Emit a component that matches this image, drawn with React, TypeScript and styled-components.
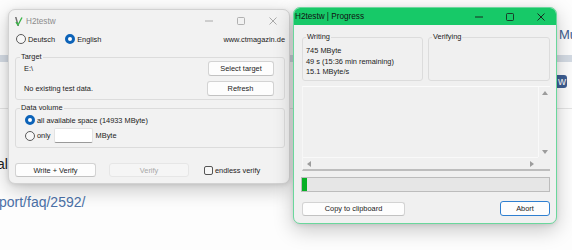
import React from 'react';
import styled, { createGlobalStyle } from 'styled-components';

const GlobalStyle = createGlobalStyle`
  html, body {
    margin: 0;
    padding: 0;
    width: 572px;
    height: 250px;
    overflow: hidden;
    background: #fdfdfd;
  }
  * {
    box-sizing: border-box;
  }
`;

const Desktop = styled.div`
  position: relative;
  width: 572px;
  height: 250px;
  overflow: hidden;
  background: #fdfdfd;
  font-family: 'Liberation Sans', Arial, sans-serif;
`;

/* ---------- browser page behind the windows ---------- */

const BackPage = styled.div`
  display: flex;
  flex-direction: column;
  width: 100%;
  height: 100%;
`;

const BackRow = styled.div<{ $top: number; $h: number; $pad?: number; $end?: boolean }>`
  display: flex;
  align-items: center;
  justify-content: ${(p) => (p.$end ? 'flex-end' : 'flex-start')};
  margin-top: ${(p) => p.$top}px;
  height: ${(p) => p.$h}px;
  padding-left: ${(p) => p.$pad || 0}px;
  white-space: nowrap;
  overflow: hidden;
`;

const PageHeading = styled.span`
  font-size: 13px;
  color: #3f5f8f;
`;

const PageBar = styled.div<{ $top: number; $h: number; $color: string }>`
  margin-top: ${(p) => p.$top}px;
  height: ${(p) => p.$h}px;
  background: ${(p) => p.$color};
`;

const PageButton = styled.div`
  width: 60px;
  height: 13px;
  margin-right: 5px;
  border-radius: 3px;
  background: #3d5e93;
  color: #fff;
  font-size: 11px;
  line-height: 12px;
  text-align: right;
  padding-right: 1px;
`;

const PageText = styled.span<{ $link?: boolean }>`
  font-size: 14px;
  color: ${(p) => (p.$link ? '#4b71a8' : '#202020')};
  margin-left: ${(p) => (p.$link ? -1 : -3)}px;
`;

/* ---------- windows ---------- */

const Window = styled.div<{ $x: number; $y: number; $w: number; $h: number; $active?: boolean }>`
  position: absolute;
  left: ${(p) => p.$x}px;
  top: ${(p) => p.$y}px;
  width: ${(p) => p.$w}px;
  height: ${(p) => p.$h}px;
  display: flex;
  flex-direction: column;
  background: ${(p) => (p.$active ? '#f0f0f0' : '#f2f2f2')};
  border: 1px solid ${(p) => (p.$active ? '#6ad79c' : '#d2d2d2')};
  border-radius: 7px;
  overflow: hidden;
  box-shadow: 0 6px 20px rgba(0, 0, 0, 0.22), 0 1px 4px rgba(0, 0, 0, 0.1);
  font-size: 7.4px;
  color: #1b1b1b;
`;

const TitleBar = styled.div<{ $h: number; $active?: boolean }>`
  display: flex;
  align-items: center;
  flex: none;
  height: ${(p) => p.$h}px;
  background: ${(p) => (p.$active ? '#17c968' : 'transparent')};
  padding-left: ${(p) => (p.$active ? 1 : 5)}px;
`;

const TitleText = styled.span<{ $active?: boolean }>`
  font-size: 8.2px;
  color: ${(p) => (p.$active ? '#111' : '#8c8c8c')};
  margin-left: ${(p) => (p.$active ? 0 : 3)}px;
`;

const Controls = styled.div`
  display: flex;
  margin-left: auto;
  height: 100%;
`;

const ControlButton = styled.div<{ $w: number }>`
  display: flex;
  align-items: center;
  justify-content: center;
  width: ${(p) => p.$w}px;
  height: 100%;
`;

const WindowControls = ({ w, color }: { w: number; color: string }) => (
  <Controls>
    <ControlButton $w={w}>
      <svg width="8" height="8" viewBox="0 0 8 8">
        <line x1="0" y1="4" x2="8" y2="4" stroke={color} strokeWidth="0.9" />
      </svg>
    </ControlButton>
    <ControlButton $w={w}>
      <svg width="8" height="8" viewBox="0 0 8 8">
        <rect x="0.5" y="0.5" width="7" height="7" rx="1" fill="none" stroke={color} strokeWidth="0.8" />
      </svg>
    </ControlButton>
    <ControlButton $w={w}>
      <svg width="8" height="8" viewBox="0 0 8 8">
        <path d="M0.5 0.5 L7.5 7.5 M7.5 0.5 L0.5 7.5" stroke={color} strokeWidth="0.9" />
      </svg>
    </ControlButton>
  </Controls>
);

const AppIcon = () => (
  <svg width="9" height="11" viewBox="0 0 9 11">
    <path d="M1 1 L3.5 10 L5 10 L2.5 1 Z" fill="#6d6d6d" />
    <path d="M2 6 L4 9 L8 1.5" fill="none" stroke="#3cb54a" strokeWidth="1.4" />
  </svg>
);

/* ---------- shared controls ---------- */

const Button = styled.div<{ $w: number; $h?: number; $disabled?: boolean; $default?: boolean }>`
  display: flex;
  align-items: center;
  justify-content: center;
  flex: none;
  width: ${(p) => p.$w}px;
  height: ${(p) => p.$h || 15}px;
  background: ${(p) => (p.$disabled ? '#f5f5f5' : '#fdfdfd')};
  border: ${(p) => (p.$default ? '1.5px solid #2f7fd0' : '1px solid #d3d3d3')};
  border-bottom-color: ${(p) => (p.$default ? '#2f7fd0' : p.$disabled ? '#e2e2e2' : '#c2c2c2')};
  ${(p) => p.$disabled && 'border-color: #e6e6e6;'}
  border-radius: 3px;
  color: ${(p) => (p.$disabled ? '#a8a8a8' : '#1b1b1b')};
`;

const RadioCircle = styled.span<{ $checked?: boolean }>`
  display: inline-block;
  flex: none;
  width: 10px;
  height: 10px;
  border-radius: 50%;
  background: ${(p) => (p.$checked ? '#fff' : '#f7f7f7')};
  border: ${(p) => (p.$checked ? '3px solid #0d63b8' : '1px solid #5a5a5a')};
`;

const RadioLabel = styled.span`
  display: inline-flex;
  align-items: center;
  gap: 2px;
`;

const Radio = ({ checked, children }: { checked?: boolean; children: React.ReactNode }) => (
  <RadioLabel>
    <RadioCircle $checked={checked} />
    <span>{children}</span>
  </RadioLabel>
);

const CheckBox = styled.span`
  display: inline-block;
  width: 9px;
  height: 9px;
  border: 1px solid #555;
  border-radius: 2px;
  background: #f7f7f7;
`;

const Group = styled.fieldset<{ $top: number; $h: number; $pad: string }>`
  margin: ${(p) => p.$top}px 0 0 0;
  height: ${(p) => p.$h}px;
  padding: ${(p) => p.$pad};
  border: 1px solid #dcdcdc;
  border-radius: 3px;
  min-width: 0;
  display: flex;
  flex-direction: column;
`;

const Legend = styled.legend`
  padding: 0 1px;
  font-size: 7.4px;
  line-height: 8px;
`;

/* ---------- H2testw main window ---------- */

const MainBody = styled.div`
  display: flex;
  flex-direction: column;
  padding: 0 4px 0 6px;
`;

const LangRow = styled.div`
  display: flex;
  align-items: center;
  gap: 10px;
  height: 14px;
  padding-left: 1px;
`;

const Url = styled.span`
  margin-left: auto;
`;

const TargetRow = styled.div<{ $h: number; $top?: number }>`
  display: flex;
  align-items: center;
  justify-content: space-between;
  height: ${(p) => p.$h}px;
  margin-top: ${(p) => p.$top || 0}px;
  padding-left: 4px;
`;

const VolumeRow = styled.div<{ $h: number }>`
  display: flex;
  align-items: center;
  height: ${(p) => p.$h}px;
  padding-left: 5px;
`;

const SizeInput = styled.div`
  width: 39px;
  height: 15px;
  margin: 0 3px 0 3px;
  background: #fff;
  border: 1px solid #e3e3e3;
  border-bottom-color: #9a9a9a;
  border-radius: 2px;
`;

const ActionRow = styled.div`
  display: flex;
  align-items: center;
  height: 14px;
  margin-top: 15px;
`;

const EndlessLabel = styled.span`
  display: inline-flex;
  align-items: center;
  gap: 2px;
  margin-left: 15px;
`;

/* ---------- progress window ---------- */

const ProgressBody = styled.div`
  display: flex;
  flex-direction: column;
  padding: 8px 6px 0 8px;
`;

const StatsRow = styled.div`
  display: flex;
  gap: 5px;
`;

const StatsGroup = styled(Group)<{ $w: number }>`
  width: ${(p) => p.$w}px;
  flex: none;
`;

const StatLine = styled.div`
  line-height: 10.5px;
  white-space: nowrap;
`;

const LogBox = styled.div`
  display: grid;
  grid-template-columns: 1fr 12px;
  grid-template-rows: 1fr 12px;
  height: 85px;
  margin-top: 5px;
  border-top: 1px solid #fbfbfb;
  border-left: 1px solid #f7f7f7;
  border-bottom: 2px solid #bdbdbd;
`;

const LogArea = styled.div`
  background: #f0f0f0;
`;

const VScroll = styled.div`
  display: flex;
  flex-direction: column;
  align-items: center;
  justify-content: space-between;
  padding: 4px 0 3px 0;
  border-left: 1px solid #f9f9f9;
`;

const HScroll = styled.div`
  display: flex;
  align-items: center;
  justify-content: space-between;
  padding: 0 4px 0 4px;
  border-top: 1px solid #f9f9f9;
`;

const Arrow = ({ dir }: { dir: 'up' | 'down' | 'left' | 'right' }) => {
  const d = {
    up: 'M0 4 L3 0 L6 4 Z',
    down: 'M0 0 L6 0 L3 4 Z',
    left: 'M4 0 L4 6 L0 3 Z',
    right: 'M0 0 L4 3 L0 6 Z',
  }[dir];
  const vertical = dir === 'up' || dir === 'down';
  return (
    <svg width={vertical ? 6 : 4} height={vertical ? 4 : 6} viewBox={vertical ? '0 0 6 4' : '0 0 4 6'}>
      <path d={d} fill="#9c9c9c" />
    </svg>
  );
};

const ProgressTrack = styled.div`
  height: 15px;
  margin: 6px 0 0 -1px;
  background: #e6e6e6;
  border: 1px solid #bcbcbc;
  display: flex;
`;

const ProgressFill = styled.div`
  background: #06b025;
  height: 100%;
`;

const ProgressButtons = styled.div`
  display: flex;
  align-items: center;
  justify-content: space-between;
  margin-top: 9px;
`;

export default function App() {
  // share of the whole test (write + verify) that is done so far
  const done = 745;
  const total = 14933 * 2;
  const fill = Math.max(4, Math.round((done / total) * 200));

  return (
    <Desktop>
      <GlobalStyle />
      <BackPage>
        <BackRow $top={27} $h={14} $pad={559}>
          <PageHeading>Mu</PageHeading>
        </BackRow>
        <PageBar $top={14} $h={7} $color="#d4dbe4" />
        <BackRow $top={13} $h={13} $end>
          <PageButton>w</PageButton>
        </BackRow>
        <PageBar $top={20} $h={1} $color="#e4e4e4" />
        <BackRow $top={47} $h={16}>
          <PageText>al</PageText>
        </BackRow>
        <BackRow $top={21} $h={18}>
          <PageText $link>port/faq/2592/</PageText>
        </BackRow>
      </BackPage>

      <Window $x={8} $y={9} $w={282} $h={175}>
        <TitleBar $h={22}>
          <AppIcon />
          <TitleText>H2testw</TitleText>
          <WindowControls w={32} color="#a0a0a0" />
        </TitleBar>
        <MainBody>
          <LangRow>
            <Radio>Deutsch</Radio>
            <Radio checked>English</Radio>
            <Url>www.ctmagazin.de</Url>
          </LangRow>
          <Group $top={7} $h={47} $pad="0 10px 3px 4px">
            <Legend>Target</Legend>
            <TargetRow $h={15}>
              <span>E:\</span>
              <Button $w={66}>Select target</Button>
            </TargetRow>
            <TargetRow $h={15} $top={5}>
              <span>No existing test data.</span>
              <Button $w={67}>Refresh</Button>
            </TargetRow>
          </Group>
          <Group $top={4} $h={44} $pad="0 10px 4px 4px">
            <Legend>Data volume</Legend>
            <VolumeRow $h={16}>
              <Radio checked>all available space (14933 MByte)</Radio>
            </VolumeRow>
            <VolumeRow $h={15}>
              <Radio>only</Radio>
              <SizeInput />
              <span>MByte</span>
            </VolumeRow>
          </Group>
          <ActionRow>
            <Button $w={81} $h={14}>Write + Verify</Button>
            <Button $w={80} $h={14} $disabled style={{ marginLeft: 13 }}>
              Verify
            </Button>
            <EndlessLabel>
              <CheckBox />
              <span>endless verify</span>
            </EndlessLabel>
          </ActionRow>
        </MainBody>
      </Window>

      <Window $x={293} $y={7} $w={264} $h={217} $active>
        <TitleBar $h={17} $active>
          <TitleText $active>H2testw | Progress</TitleText>
          <WindowControls w={31} color="#1a1a1a" />
        </TitleBar>
        <ProgressBody>
          <StatsRow>
            <StatsGroup $w={121} $top={0} $h={48} $pad="5px 4px 0 3px">
              <Legend>Writing</Legend>
              <StatLine>745 MByte</StatLine>
              <StatLine>49 s (15:36 min remaining)</StatLine>
              <StatLine>15.1 MByte/s</StatLine>
            </StatsGroup>
            <StatsGroup $w={122} $top={0} $h={48} $pad="5px 4px 0 3px">
              <Legend>Verifying</Legend>
            </StatsGroup>
          </StatsRow>
          <LogBox>
            <LogArea />
            <VScroll>
              <Arrow dir="up" />
              <Arrow dir="down" />
            </VScroll>
            <HScroll>
              <Arrow dir="left" />
              <Arrow dir="right" />
            </HScroll>
            <div />
          </LogBox>
          <ProgressTrack>
            <ProgressFill style={{ width: fill }} />
          </ProgressTrack>
          <ProgressButtons>
            <Button $w={103} $h={14}>Copy to clipboard</Button>
            <Button $w={50} $h={15} $default>Abort</Button>
          </ProgressButtons>
        </ProgressBody>
      </Window>
    </Desktop>
  );
}
